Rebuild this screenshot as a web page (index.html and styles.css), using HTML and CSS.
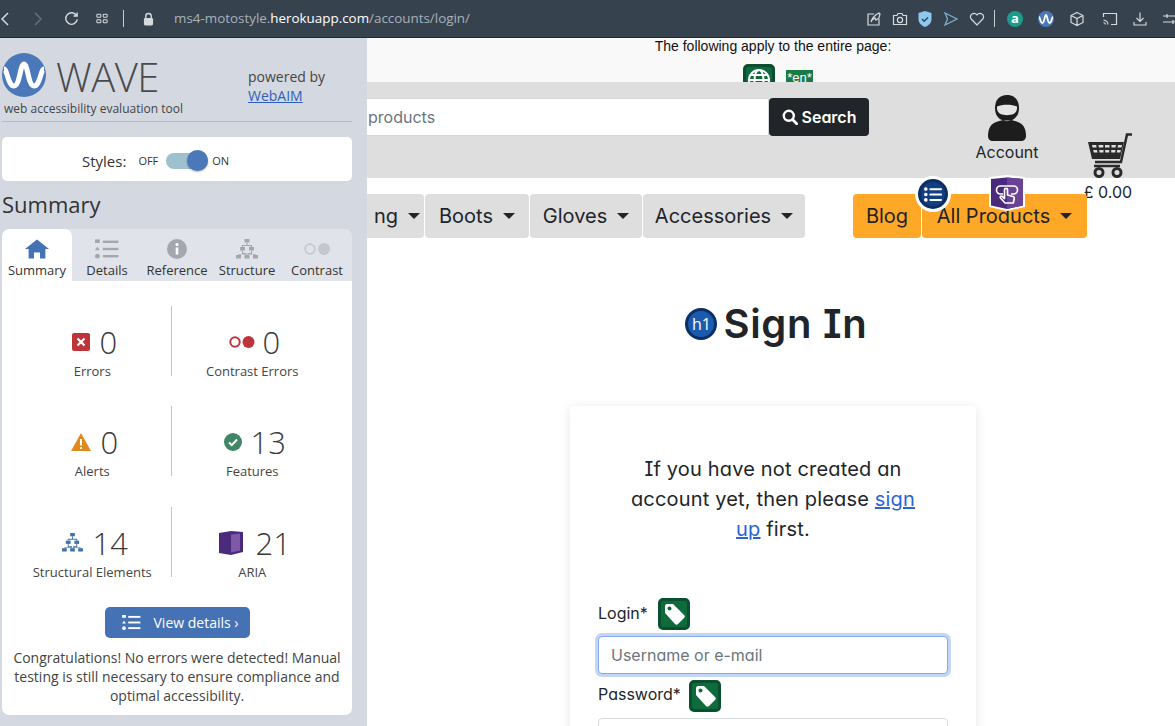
FILE: index.html
```html
<!DOCTYPE html>
<html lang="en">
<head>
<meta charset="utf-8">
<title>Sign In</title>
<link rel="stylesheet" href="styles.css">
</head>
<body>
<header class="chrome">
  <div class="chrome-left">
    <svg class="ci back" viewBox="0 0 10 16"><path d="M8 2 2 8l6 6"/></svg>
    <svg class="ci forward" viewBox="0 0 10 16"><path d="m2 2 6 6-6 6"/></svg>
    <svg class="ci reload" viewBox="0 0 16 16"><path d="M13.6 5.2A6.2 6.2 0 1 0 14.2 9M14 1.6v3.8h-3.8"/></svg>
    <svg class="ci grid" viewBox="0 0 14 12"><rect x="1" y="1" width="4.6" height="3.6" rx="1"/><rect x="8.4" y="1" width="4.6" height="3.6" rx="1"/><rect x="1" y="7.4" width="4.6" height="3.6" rx="1"/><rect x="8.4" y="7.4" width="4.6" height="3.6" rx="1"/></svg>
    <span class="chrome-sep"></span>
    <svg class="lock" viewBox="0 0 12 14"><path d="M3 6V4a3 3 0 0 1 6 0v2" class="shackle"/><rect x="1" y="6" width="10" height="8" rx="1.5"/></svg>
    <div class="url">ms4-motostyle.<b>herokuapp.com</b>/accounts/login/</div>
  </div>
  <div class="chrome-right">
    <svg class="ci r1" viewBox="0 0 16 16"><path d="M8 3H2v11h11V8M5 11c1-4 4-7 8-9l1 1-1 4-3 2-1-2-3 2z"/></svg>
    <svg class="ci r2" viewBox="0 0 16 16"><path d="M1.500 4.500h3.500l1-2h4l1 2h3.500v9h-13z"/><circle cx="8" cy="9" r="2.600"/></svg>
    <svg class="r3" viewBox="0 0 14 16"><path class="shield" d="M7 0 13.500 2v6.500C13.500 12 10 15 7 16 4 15 .5 12 .5 8.500V2z"/><path class="shield-tick" d="m4 8 2.200 2.200L10 6.500"/></svg>
    <svg class="ci r4" viewBox="0 0 16 16"><path class="send" d="M2 2 14 8 2 14l2.500-6z"/></svg>
    <svg class="ci r5" viewBox="0 0 16 16"><path d="M8 14 2.200 8A3.500 3.500 0 0 1 8 4a3.500 3.500 0 0 1 5.800 4z"/></svg>
    <span class="chrome-sep sep2"></span>
    <span class="ext-a">a</span>
    <svg class="r7" viewBox="0 0 44 44"><circle cx="22" cy="22" r="22" class="wave-disc"/><path class="wave-line" d="M3 16c3 0 3 17 9 17s6-22 10-22 4 22 10 22 6-17 9-17"/></svg>
    <svg class="ci r8" viewBox="0 0 16 16"><path d="M8 1.500 14 4.500v7l-6 3-6-3v-7zM2 4.500l6 3 6-3M8 7.500v7"/></svg>
    <svg class="ci r9" viewBox="0 0 16 16"><path d="M1.500 6V2.500h13v11H9M1.500 9a5 5 0 0 1 4.500 4.500M1.500 11.500a2.500 2.500 0 0 1 2 2"/></svg>
    <svg class="ci r10" viewBox="0 0 16 16"><path d="M8 1.500v9M4.500 7 8 10.500 11.500 7M2 11v3h12v-3"/></svg>
    <svg class="ci r11" viewBox="0 0 16 16"><path d="M1 5h14M1 11h14M5 3v4M11 9v4"/></svg>
  </div>
</header>

<div class="stage">
  <aside class="wave">
    <div class="brand">
      <svg class="brand-logo" viewBox="0 0 44 44"><circle cx="22" cy="22" r="22" class="wave-disc"/><path class="wave-line" d="M2 16c3 0 4 17 10 17s6-22 10-22 4 22 10 22 7-17 10-17"/></svg>
      <span class="brand-name">WAVE</span>
      <span class="powered">powered by<br><a href="#">WebAIM</a></span>
    </div>
    <p class="tagline">web accessibility evaluation tool</p>

    <div class="styles-box">
      <span class="styles-label">Styles:</span>
      <span class="styles-state">OFF</span>
      <span class="toggle"><span class="knob"></span></span>
      <span class="styles-state">ON</span>
    </div>

    <h2 class="panel-title">Summary</h2>

    <nav class="tabs">
      <div class="tab active">
        <svg class="tab-icon" viewBox="0 0 20 16"><path class="home" d="M10 0 20 8h-3v8h-4.500v-5h-5v5H3V8H0z"/></svg>
        <span>Summary</span>
      </div>
      <div class="tab">
        <svg class="tab-icon" viewBox="0 0 20 16"><g class="grey-fill"><rect x="0" y="0" width="4" height="3"/><path d="M2 6 4 9H0z"/><circle cx="2" cy="14" r="2"/><rect x="6.500" y="1" width="13" height="2"/><rect x="6.500" y="7" width="13" height="2"/><rect x="6.500" y="13" width="13" height="2"/></g></svg>
        <span>Details</span>
      </div>
      <div class="tab">
        <svg class="tab-icon" viewBox="0 0 20 20"><circle cx="10" cy="10" r="10" class="grey-fill"/><rect x="8.700" y="8.500" width="2.600" height="7" fill="#fff"/><circle cx="10" cy="5.500" r="1.600" fill="#fff"/></svg>
        <span>Reference</span>
      </div>
      <div class="tab">
        <svg class="tab-icon" viewBox="0 0 22 20"><g class="grey-fill"><rect x="8.500" y="0" width="5" height="3.500"/><rect x="4" y="8" width="5" height="3.500"/><rect x="13" y="8" width="5" height="3.500"/><rect x="0" y="16" width="5" height="3.500"/><rect x="8.500" y="16" width="5" height="3.500"/><rect x="17" y="16" width="5" height="3.500"/><path d="M10.500 3.500h1V6H16v2h-1V7H7v1H6V6h4.500zM6 11.500h1V14h3.500v2h1v-2H15v-2.500h1V15h3.500v1h-1v-.5H3.500v.5h-1v-1H6z"/></g></svg>
        <span>Structure</span>
      </div>
      <div class="tab">
        <svg class="tab-icon tab-contrast" viewBox="0 0 26 12"><circle cx="6" cy="6" r="4.800" class="ring-grey"/><circle cx="20" cy="6" r="6" fill="#c4c8ce"/></svg>
        <span>Contrast</span>
      </div>
    </nav>

    <section class="panel">
      <div class="metrics">
        <div class="metric">
          <div class="metric-top"><svg class="m-icon m-err" viewBox="0 0 18 18"><rect width="18" height="18" rx="2" fill="#bd3439"/><path d="m5.500 5.500 7 7m0-7-7 7" stroke="#fff" stroke-width="2.200"/></svg><span class="num">0</span></div>
          <div class="m-label">Errors</div>
        </div>
        <div class="metric divided">
          <div class="metric-top"><svg class="m-icon m-con" viewBox="0 0 26 12"><circle cx="6" cy="6" r="4.700" fill="none" stroke="#bd3439" stroke-width="2"/><circle cx="19.500" cy="6" r="6" fill="#bd3439"/></svg><span class="num">0</span></div>
          <div class="m-label">Contrast Errors</div>
        </div>
        <div class="metric">
          <div class="metric-top"><svg class="m-icon m-alert" viewBox="0 0 20 18"><path d="M10 0 20 18H0z" fill="#e08a1e"/><rect x="9" y="6" width="2" height="6.500" fill="#fff"/><rect x="9" y="14" width="2" height="2" fill="#fff"/></svg><span class="num">0</span></div>
          <div class="m-label">Alerts</div>
        </div>
        <div class="metric divided">
          <div class="metric-top"><svg class="m-icon m-feat" viewBox="0 0 18 18"><circle cx="9" cy="9" r="9" fill="#3f8566"/><path d="m5 9.500 2.800 2.600L13 6.500" fill="none" stroke="#fff" stroke-width="2"/></svg><span class="num">13</span></div>
          <div class="m-label">Features</div>
        </div>
        <div class="metric">
          <div class="metric-top"><svg class="m-icon m-struct" viewBox="0 0 22 20"><g fill="#4472ab"><rect x="8.500" y="0" width="5" height="3.500"/><rect x="4" y="8" width="5" height="3.500"/><rect x="13" y="8" width="5" height="3.500"/><rect x="0" y="16" width="5" height="3.500"/><rect x="8.500" y="16" width="5" height="3.500"/><rect x="17" y="16" width="5" height="3.500"/><path d="M10.500 3.500h1V6H16v2h-1V7H7v1H6V6h4.500zM6 11.500h1V14h3.500v2h1v-2H15v-2.500h1V15h3.500v1h-1v-.5H3.500v.5h-1v-1H6z"/></g></svg><span class="num">14</span></div>
          <div class="m-label">Structural Elements</div>
        </div>
        <div class="metric divided">
          <div class="metric-top"><svg class="m-icon m-aria" viewBox="0 0 24 24"><path d="M0 2 12 0l12 1v20l-12 3-12-2z" fill="#4a2a7c"/><path d="M12 3.500 21 2.500v17l-9 2z" fill="#7e5aa6"/></svg><span class="num">21</span></div>
          <div class="m-label">ARIA</div>
        </div>
      </div>
      <a class="view-btn" href="#">
        <svg class="view-icon" viewBox="0 0 20 16"><g fill="#fff"><rect x="0" y="0" width="4" height="3"/><path d="M2 6 4 9H0z"/><circle cx="2" cy="14" r="2"/><rect x="6.500" y="1" width="13" height="2"/><rect x="6.500" y="7" width="13" height="2"/><rect x="6.500" y="13" width="13" height="2"/></g></svg>
        <span>View details ›</span>
      </a>
      <p class="congrats">Congratulations! No errors were detected! Manual testing is still necessary to ensure compliance and optimal accessibility.</p>
    </section>
  </aside>

  <main class="page">
    <div class="doc-flags">
      <p>The following apply to the entire page:</p>
      <div class="flag-row">
        <span class="wicon globe"><svg viewBox="0 0 24 24"><g fill="none" stroke="#fff" stroke-width="2"><circle cx="12" cy="12" r="10"/><ellipse cx="12" cy="12" rx="4.500" ry="10"/><path d="M2 12h20M3.500 7h17M3.500 17h17"/></g></svg></span>
        <span class="en">*en*</span>
      </div>
    </div>

    <div class="site-head">
      <div class="search">
        <div class="search-input">products</div>
        <div class="search-btn"><svg class="mag" viewBox="0 0 16 16"><circle cx="6.800" cy="6.800" r="5" fill="none" stroke="#fff" stroke-width="2.400"/><path d="m10.500 10.500 4.200 4.200" stroke="#fff" stroke-width="2.800" stroke-linecap="round"/></svg>Search</div>
      </div>
      <div class="account">
        <svg class="rider" viewBox="0 0 38 46"><path fill="#1d1d1d" d="M19 0c7.500 0 12 5 12 13 0 7-3.500 11-8 12.500h-8C10.500 24 7 20 7 13 7 5 11.500 0 19 0z"/><path fill="#e4e4e4" d="M9 11.500c5.500-2.500 14.500-2.500 20 0 .4 4-1.500 6.500-3.500 7.500-3.500 1.500-9.500 1.500-13 0-2-1-3.900-3.500-3.500-7.500z"/><path fill="#1d1d1d" d="M6 28c4-2 7-2.500 9-3 2.500 1.500 5.500 1.500 8 0 2 .5 5 1 9 3 4 2 6 7 6 13 0 3-2 5-5 5H5c-3 0-5-2-5-5 0-6 2-11 6-13z"/></svg>
        <span>Account</span>
      </div>
      <div class="cart">
        <svg class="cart-icon" viewBox="0 0 44 46"><g fill="none" stroke="#2a2a2a"><path stroke-width="2.500" d="M44 1.500h-5L33 29H7"/><circle cx="11" cy="39.500" r="4" stroke-width="3"/><circle cx="29" cy="39.500" r="4" stroke-width="3"/><path stroke-width="2.500" d="M6 33h26"/></g><path fill="#2a2a2a" d="M0 9h36l-4 17H4zm4 3 .6 2.500h4l-.4-2.500zm6.500 0 .3 2.500h4.500V12zm6.500 0v2.500h4.500V12zm6.500 0v2.500h4L28 12zm6.500 0-.5 2.500h4l.5-2.500zM5.200 17l.6 2.500h3.700L9 17zm6 0 .3 2.500h4V17zm6 0v2.500h4V17zm6 0v2.500h4l.3-2.500zm6 0-.4 2.500h3.500l.6-2.500z"/></svg>
        <span class="cart-total">£ 0.00</span>
      </div>
    </div>

    <nav class="site-nav">
      <div class="nav-left">
        <span class="nav-item clipped">ng<i class="caret"></i></span>
        <span class="nav-item">Boots<i class="caret"></i></span>
        <span class="nav-item">Gloves<i class="caret"></i></span>
        <span class="nav-item">Accessories<i class="caret"></i></span>
      </div>
      <div class="nav-right">
        <span class="nav-item orange">Blog</span>
        <span class="nav-item orange">All Products<i class="caret"></i></span>
        <span class="wave-badge list-badge"><svg viewBox="0 0 20 16"><g fill="#fff"><circle cx="2" cy="2" r="2"/><circle cx="2" cy="8" r="2"/><circle cx="2" cy="14" r="2"/><rect x="6" y="1" width="14" height="2.200" rx="1"/><rect x="6" y="7" width="14" height="2.200" rx="1"/><rect x="6" y="13" width="14" height="2.200" rx="1"/></g></svg></span>
        <span class="wave-badge aria-badge"><svg viewBox="0 0 36 36"><path fill="#fff" d="M18 0 36 2v30l-18 4-18-4V2z"/><path fill="#4a2a7c" d="M18 2.500 34 4v26.500l-16 3.500-16-3.500V4z"/><path fill="#6b4396" d="M18 2.500 34 4v26.500l-16 3.500z"/><g fill="none" stroke="#fff" stroke-width="1.700" stroke-linejoin="round"><path d="M14 19h-2.500a3.500 3.500 0 0 1 0-8h13a3.500 3.500 0 0 1 0 8H22"/><path d="M15.500 14.500c0-1.500 3-1.500 3 0V20l5.500 1.500c1 .3 1.500 1 1.300 2l-1 4.500H16l-4.500-5c-1-1.200.5-2.500 1.700-1.500l2.300 2z"/></g></svg></span>
      </div>
    </nav>

    <div class="heading">
      <span class="h1-badge">h1</span>
      <h1>Sign In</h1>
    </div>

    <section class="card">
      <p class="card-intro">If you have not created an account yet, then please <a href="#">sign up</a> first.</p>
      <div class="label-row">
        <label>Login*</label>
        <span class="wicon tag"><svg viewBox="0 0 24 24"><path fill="#fff" d="M3 4c0-1 1-2 2-2h6l11 11c1 1 1 2 0 3l-6 6c-1 1-2 1-3 0L3 11z"/><circle cx="7.500" cy="6.500" r="2" fill="#0f6b3c"/></svg></span>
      </div>
      <div class="field focused">Username or e-mail</div>
      <div class="label-row second">
        <label>Password*</label>
        <span class="wicon tag"><svg viewBox="0 0 24 24"><path fill="#fff" d="M3 4c0-1 1-2 2-2h6l11 11c1 1 1 2 0 3l-6 6c-1 1-2 1-3 0L3 11z"/><circle cx="7.500" cy="6.500" r="2" fill="#0f6b3c"/></svg></span>
      </div>
      <div class="field"></div>
    </section>
  </main>
</div>
</body>
</html>
```

FILE: styles.css
```css
* { box-sizing: border-box; }
html, body { margin: 0; height: 726px; overflow: hidden; }
body { background: #fff; font-family: "Open Sans", sans-serif; color: #333; }
p, h1, h2 { margin: 0; }

/* browser toolbar */
.chrome { height: 38px; background: #37424f; border-bottom: 1px solid #20272f; display: flex; justify-content: space-between; align-items: center; overflow: hidden; }
.chrome-left, .chrome-right { display: flex; align-items: center; }
.ci { fill: none; stroke: #d5dade; stroke-width: 1.200; flex: none; }
.back { width: 10px; height: 16px; stroke-width: 1.500; }
.forward { width: 10px; height: 16px; margin-left: 23px; stroke: #66707b; stroke-width: 1.500; }
.reload { width: 15px; height: 15px; margin-left: 21px; stroke-width: 1.500; }
.grid { width: 12px; height: 11px; margin-left: 17px; }
.chrome-sep { width: 1px; height: 17px; background: #c6cbd0; margin-left: 15px; flex: none; }
.lock { width: 11px; height: 14px; margin-left: 19px; fill: #d5dade; flex: none; }
.shackle { fill: none; stroke: #d5dade; stroke-width: 1.500; }
.url { margin: 0 0 2px 20px; font-size: 13.400px; color: #a9b1b9; white-space: nowrap; }
.url b { color: #fff; font-weight: 400; }
.chrome-right svg { width: 16px; height: 16px; flex: none; }
.chrome-right { margin-right: -3px; }
.chrome-right .r2 { margin-left: 10px; }
.chrome-right .r3 { margin-left: 10px; width: 14px; }
.shield { fill: #8ec8f0; }
.shield-tick { fill: none; stroke: #2d4a66; stroke-width: 1.600; }
.chrome-right .r4 { margin-left: 11px; }
.send { stroke: #7fb4d0; }
.chrome-right .r5 { margin-left: 10px; }
.sep2 { margin-left: 9px; }
.ext-a { width: 16px; height: 16px; border-radius: 50%; background: #1a9c8c; color: #fff; font: 700 13px/15px "Open Sans", sans-serif; text-align: center; margin-left: 12px; flex: none; }
.chrome-right .r7 { margin-left: 15px; }
.chrome-right .r8 { margin-left: 15px; }
.chrome-right .r9 { margin-left: 17px; }
.chrome-right .r10 { margin-left: 14px; }
.chrome-right .r11 { margin-left: 14px; }

.wave-disc { fill: #4a78b8; }
.wave-line { fill: none; stroke: #fff; stroke-width: 5; }

.stage { display: flex; height: 688px; }

/* WAVE sidebar */
.wave { flex: 0 0 367px; background: #d4d9e1; padding: 15px 15px 0 2px; height: 688px; position: relative; z-index: 2; overflow: hidden; }
.brand { display: flex; align-items: flex-start; height: 44px; }
.brand-logo { width: 44px; height: 44px; flex: none; }
.brand-name { font-size: 40px; font-weight: 300; color: #4a4a4a; margin: 4px 0 0 10px; line-height: 40px; letter-spacing: -.5px; width: 192px; flex: none; }
.powered { font-size: 14px; line-height: 19px; color: #444; margin-top: 13.500px; }
.powered a { color: #2f5fb8; }
.tagline { font-size: 12px; color: #444; line-height: 17px; margin-top: 3px; padding: 0 2px 4px; border-bottom: 1px solid #b5bac2; height: 22px; }
.styles-box { height: 44px; margin-top: 15px; padding: 3px 0 0 80px; background: #fff; border-radius: 5px; display: flex; align-items: center; }
.styles-label { font-size: 15px; margin-right: 12px; }
.styles-state { font-size: 11px; color: #333; }
.toggle { width: 42px; height: 16px; border-radius: 8px; background: #9fc0cd; margin: 0 4px 0 8px; display: flex; align-items: center; justify-content: flex-end; }
.knob { width: 21px; height: 21px; border-radius: 50%; background: #4a78b8; box-shadow: 0 1px 2px rgba(0,0,0,.3); flex: none; }
.panel-title { font-size: 22px; font-weight: 400; line-height: 30px; margin-top: 8px; color: #333; }
.tabs { margin-top: 10px; height: 52px; display: flex; background: #e0e4ea; border-radius: 7px 7px 0 0; overflow: hidden; }
.tab { flex: 1 1 0; display: flex; flex-direction: column; align-items: center; justify-content: flex-end; font-size: 13px; line-height: 17px; padding-bottom: 2px; white-space: nowrap; color: #333; }
.tab.active { background: #fff; border-radius: 7px 7px 0 0; }
.tab-icon { height: 20px; width: 24px; margin-bottom: 3px; }
.tab-contrast { width: 26px; }
.home { fill: #4472b4; }
.grey-fill { fill: #a4a8ae; }
.ring-grey { fill: none; stroke: #c4c8ce; stroke-width: 1.800; }
.panel { background: #fff; height: 434px; padding-top: 25px; border-radius: 0 0 7px 7px; }
.metrics { display: grid; grid-template-columns: 156.500px 162.500px; grid-auto-rows: 70px; row-gap: 30.400px; padding-left: 12px; }
.metric { text-align: center; }
.metric.divided { border-left: 1px solid #c4c4c4; }
.metric-top { display: flex; align-items: center; justify-content: center; height: 54px; padding: 18px 0 0 5px; }
.num { font-size: 31px; font-weight: 300; color: #3a3a3a; line-height: 36px; }
.m-icon { flex: none; margin-right: 9px; }
.m-err { width: 18px; height: 18px; }
.m-con { width: 26px; height: 12px; margin-right: 7px; }
.m-alert { width: 20px; height: 18px; margin-right: 9px; }
.m-feat { width: 18px; height: 18px; margin-right: 9px; }
.m-struct { width: 21px; height: 19px; margin-right: 10px; }
.m-aria { width: 24px; height: 24px; margin-right: 13px; }
.m-label { font-size: 13px; line-height: 17px; color: #444; margin-top: 3px; white-space: nowrap; }
.view-btn { display: flex; align-items: center; width: 145px; height: 31px; margin: 30px auto 0; background: #4472b4; color: #fff; border-radius: 5px; font-size: 14px; text-decoration: none; padding-left: 17px; }
.view-icon { width: 19px; height: 15px; margin-right: 13px; }
.congrats { font-size: 14px; line-height: 19px; text-align: center; color: #444; margin-top: 10px; padding: 0 7px; }

/* site page */
.page { flex: 1 1 0; min-width: 0; overflow: hidden; font-family: Inter, sans-serif; font-feature-settings: "cv08", "cv11"; color: #212529; position: relative; }
.doc-flags { height: 44px; background: #f9f9f9; overflow: hidden; text-align: center; padding-left: 4px; font-family: "Liberation Sans", sans-serif; font-feature-settings: normal; font-size: 14px; color: #111; }
.doc-flags p { line-height: 16px; }
.flag-row { display: flex; justify-content: center; align-items: flex-start; gap: 11px; margin-top: 10px; margin-left: 10px; }
.wicon { width: 32px; height: 32px; border-radius: 5px; background: #0f6b3c; border: 3px solid #0a5030; display: inline-flex; align-items: center; justify-content: center; flex: none; }
.wicon svg { width: 24px; height: 24px; }
.en { background: #1a7a45; color: #fff; font-size: 13px; line-height: 15px; margin-top: 6px; padding: 0 1px; }

.site-head { height: 96px; background: #dedede; display: flex; align-items: flex-start; }
.search { display: flex; margin-top: 16px; width: 502px; flex: none; }
.search-input { width: 402px; height: 38px; background: #fff; border: 1px solid #d6d6d6; border-left: 0; color: #6c757d; font-size: 16px; line-height: 36px; padding-left: 1px; }
.search-btn { width: 100px; height: 38px; background: #212529; color: #fff; border-radius: 4px; display: flex; align-items: center; justify-content: center; gap: 4px; font-size: 16px; font-weight: 600; }
.mag { width: 16px; height: 16px; }
.account { display: flex; flex-direction: column; align-items: center; width: 80px; margin-left: 98px; margin-top: 13px; font-size: 16px; line-height: 20px; }
.rider { width: 38px; height: 46px; margin-bottom: 1px; }
.cart { display: flex; flex-direction: column; align-items: center; width: 60px; margin-left: 31px; margin-top: 51px; font-size: 16px; line-height: 20px; }
.cart-icon { width: 44px; height: 46px; margin: 0 0 3px 4px; }

.site-nav { display: flex; margin-top: 16px; height: 44px; font-size: 20px; }
.nav-left { display: flex; gap: 1px; width: 486px; flex: none; }
.nav-right { display: flex; gap: 1px; position: relative; }
.nav-item { background: #dedede; border-radius: 4px; height: 44px; display: flex; align-items: center; justify-content: center; white-space: nowrap; }
.nav-item.clipped { width: 57px; border-radius: 0 4px 4px 0; padding-right: 4px; justify-content: flex-end; }
.nav-left .nav-item:nth-child(2) { width: 104px; }
.nav-left .nav-item:nth-child(3) { width: 112px; }
.nav-left .nav-item:nth-child(4) { width: 162px; }
.nav-item.orange { background: #ffa726; }
.nav-right .nav-item:nth-child(1) { width: 68px; }
.nav-right .nav-item:nth-child(2) { width: 165px; }
.caret { width: 0; height: 0; border: 6px solid transparent; border-top-color: currentColor; border-bottom: 0; margin-left: 10px; }
.wave-badge { position: absolute; }
.list-badge { left: 62px; top: -18px; width: 36px; height: 36px; border-radius: 50%; background: #123f82; border: 3px solid #fff; display: flex; align-items: center; justify-content: center; box-shadow: inset 0 0 0 3px #0b2e64; }
.list-badge svg { width: 18px; height: 15px; }
.aria-badge { left: 136px; top: -19px; width: 36px; height: 36px; }
.aria-badge svg { width: 36px; height: 36px; display: block; }

.heading { display: flex; align-items: center; justify-content: center; margin-top: 64px; height: 44px; gap: 6px; padding-left: 11px; }
.h1-badge { width: 32px; height: 32px; border-radius: 50%; background: #1a5bb0; border: 3px solid #0b2e64; color: #fff; font-size: 16px; display: flex; align-items: center; justify-content: center; flex: none; font-family: "Open Sans", sans-serif; }
h1 { font-size: 40px; font-weight: 600; line-height: 44px; letter-spacing: .7px; }

.card { width: 406px; margin: 60px 0 0 203px; height: 340px; padding: 48px 28px 0; background: #fff; border-radius: 4px; box-shadow: 0 2px 12px rgba(0,0,0,.1); }
.card-intro { font-size: 20px; line-height: 30px; text-align: center; padding: 0 30px; letter-spacing: .17px; }
.card-intro a { color: #2a64d6; }
.label-row { display: flex; align-items: center; gap: 10px; margin-top: 54px; height: 32px; font-size: 16px; }
.label-row label { padding-bottom: 3px; }
.label-row.second { margin-top: 6px; gap: 8px; }
.label-row.second label { padding-bottom: 5px; }
.field { height: 38px; border: 1px solid #d6d9dc; border-radius: 4px; margin-top: 6px; padding-left: 12px; color: #6c757d; font-size: 16px; line-height: 36px; background: #fff; }
.field.focused { border-color: #86a8e8; box-shadow: 0 0 0 3px #c2d6f8; }
```
